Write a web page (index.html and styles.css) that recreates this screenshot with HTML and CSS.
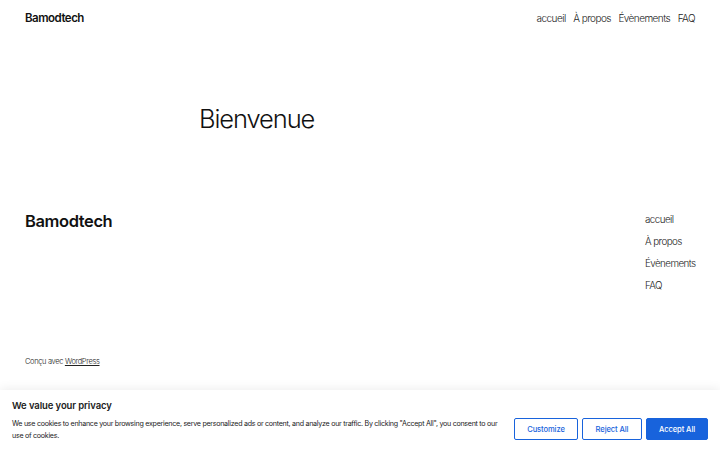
FILE: index.html
```html
<!DOCTYPE html>
<html lang="fr">
<head>
<meta charset="utf-8">
<title>Bamodtech</title>
<link rel="stylesheet" href="styles.css">
</head>
<body>
<header class="site-header">
  <a class="site-title" href="#">Bamodtech</a>
  <nav class="main-nav">
    <a href="#">accueil</a>
    <a href="#">À propos</a>
    <a href="#">Évènements</a>
    <a href="#">FAQ</a>
  </nav>
</header>
<main class="content">
  <h1 class="page-title">Bienvenue</h1>
</main>
<footer class="site-footer">
  <div class="footer-top">
    <a class="footer-title" href="#">Bamodtech</a>
    <nav class="footer-nav">
      <a href="#">accueil</a>
      <a href="#">À propos</a>
      <a href="#">Évènements</a>
      <a href="#">FAQ</a>
    </nav>
  </div>
  <p class="credit">Conçu avec <a href="#">WordPress</a></p>
</footer>
<div class="cookie-banner">
  <div class="cookie-text">
    <p class="cookie-title">We value your privacy</p>
    <p class="cookie-desc">We use cookies to enhance your browsing experience, serve personalized ads or content, and analyze our traffic. By clicking "Accept All", you consent to our use of cookies.</p>
  </div>
  <div class="cookie-buttons">
    <button class="btn btn-outline btn-customize">Customize</button>
    <button class="btn btn-outline btn-reject">Reject All</button>
    <button class="btn btn-filled btn-accept">Accept All</button>
  </div>
</div>
</body>
</html>
```

FILE: styles.css
```css
* { box-sizing: border-box; }
html, body { margin: 0; padding: 0; }
body {
  font-family: Inter, "Noto Sans", sans-serif;
  color: #111;
  background: #fff;
  width: 720px;
  height: 450px;
  overflow: hidden;
  position: relative;
}
a { color: inherit; text-decoration: none; }
p { margin: 0; }

.site-header {
  display: flex;
  justify-content: space-between;
  align-items: center;
  padding: 0 25px;
  height: 35px;
}
.site-title {
  font-size: 11.5px;
  font-weight: 600;
  letter-spacing: -0.5px;
}
.main-nav {
  display: flex;
  gap: 7.5px;
  font-size: 10px;
  font-weight: 300;
  letter-spacing: -0.55px;
  color: #222;
}

.content {
  width: 322px;
  margin: 0 auto;
  padding-top: 67px;
  height: 165px;
}
.page-title {
  margin: 0;
  font-size: 25.5px;
  font-weight: 300;
  letter-spacing: -1.1px;
  line-height: 34px;
}

.site-footer {
  padding: 0 25px;
}
.footer-top {
  display: flex;
  justify-content: space-between;
  align-items: flex-start;
  padding-top: 9px;
  height: 157px;
}
.footer-title {
  font-size: 16.5px;
  font-weight: 600;
  letter-spacing: -0.4px;
  line-height: 24px;
}
.footer-nav {
  display: flex;
  flex-direction: column;
  gap: 7px;
  font-size: 9.8px;
  font-weight: 300;
  letter-spacing: -0.55px;
  line-height: 15px;
  color: #222;
  width: 50px;
  padding-top: 3px;
}
.credit {
  font-size: 7.5px;
  font-weight: 300;
  letter-spacing: -0.35px;
  color: #222;
}
.credit a { text-decoration: underline; }

.cookie-banner {
  position: absolute;
  left: 0;
  right: 0;
  bottom: 0;
  height: 60px;
  background: #fff;
  box-shadow: 0 -1px 10px rgba(0,0,0,0.08);
  display: flex;
  align-items: flex-start;
  justify-content: space-between;
  padding: 10px 12px 0 12px;
}
.cookie-title {
  font-size: 9.5px;
  font-weight: 600;
  color: #212121;
  margin-bottom: 6px;
  line-height: 12px;
  letter-spacing: -0.1px;
}
.cookie-desc {
  font-size: 7.1px;
  line-height: 12px;
  color: #212121;
  width: 496px;
  letter-spacing: -0.27px;
}
.cookie-buttons {
  display: flex;
  gap: 4px;
  padding-top: 18px;
}
.btn {
  font-family: Inter, "Noto Sans", sans-serif;
  font-size: 7.6px;
  height: 22px;
  border: 1.5px solid #1863dc;
  border-radius: 2px;
  padding: 0;
  font-weight: 500;
  letter-spacing: -0.1px;
}
.btn-outline { background: #fff; color: #1863dc; }
.btn-filled { background: #1863dc; color: #fff; }
.btn-customize { width: 64px; }
.btn-reject { width: 60px; }
.btn-accept { width: 62px; }
```
